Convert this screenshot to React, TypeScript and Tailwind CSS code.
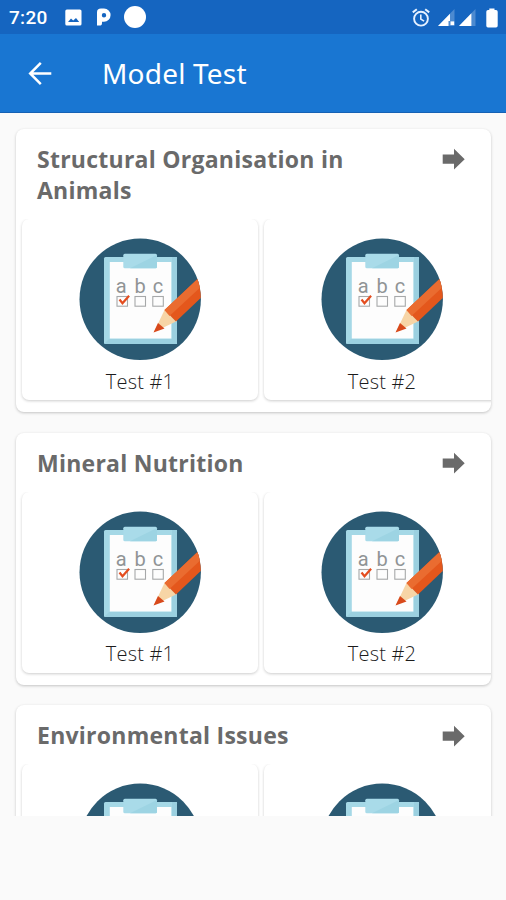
import React from "react";

const SANS = "font-['Open_Sans',sans-serif]";

function StatusBar() {
  return (
    <div className="flex h-[34px] items-center justify-between bg-[#1565c0] text-white">
      <div className="flex items-center pl-[9px]">
        <span className="w-[56px] pt-px font-[Roboto,sans-serif] text-[19px] leading-[34px] font-medium tracking-[0.3px]">7:20</span>
        <svg className="h-[17px] w-[17px]" viewBox="0 0 17 17">
          <rect x="0.3" y="0.5" width="16.2" height="16" rx="1.6" fill="#fff" />
          <path d="M3 13l3-3.5 2.2 2L11 9l3.2 4z" fill="#1565c0" />
        </svg>
        <svg className="ml-[14px] h-[18px] w-[16px]" viewBox="0 0 16 18">
          <path fillRule="evenodd" d="M1 17.5V4.2Q1 .5 5 .5h3a6.6 6.6 0 0 1 0 13.2H6v1.2Q6 17.5 3.5 17.5zM8 5a2.2 2.2 0 1 0 0 4.4 2.2 2.2 0 0 0 0-4.4z" fill="#fff" />
        </svg>
        <div className="ml-[12px] h-[22px] w-[22px] rounded-full bg-white" />
      </div>
      <div className="flex items-center pt-px pr-[8px]">
        <svg className="h-[19px] w-[18px]" viewBox="0 0 18 19" fill="none" stroke="#e6f1ff">
          <circle cx="9" cy="10.7" r="6.9" strokeWidth="1.9" />
          <path d="M8.8 6.5v4.6l3.3 2.1" strokeWidth="1.6" />
          <path d="M.8 4.4l4-3.2M17.2 4.4l-4-3.2" strokeWidth="2" />
        </svg>
        <svg className="ml-[8px] h-[17px] w-[17px]" viewBox="0 0 17 17">
          <path d="M16.5 0v17H0z" fill="#4c8ad0" />
          <path d="M12 4.7V12h-1.5v5H0z" fill="#fff" />
          <rect x="12.5" y="12.4" width="3.7" height="3.7" fill="#fff" />
        </svg>
        <svg className="ml-[4px] h-[17px] w-[17px]" viewBox="0 0 17 17">
          <path d="M16.5 0v17H0z" fill="#4c8ad0" />
          <path d="M12.4 4.3V17H0z" fill="#fff" />
        </svg>
        <svg className="ml-[10px] h-[20px] w-[12px]" viewBox="0 0 12 20">
          <path d="M3.3 2V.4h5.2V2H10q1.7 0 1.7 1.7v14.1q0 1.7-1.7 1.7H2Q.3 19.5.3 17.8V3.7Q.3 2 2 2z" fill="#fff" />
        </svg>
      </div>
    </div>
  );
}

function AppBar() {
  return (
    <header className="flex h-[79px] items-center border-b border-[#1561b4] bg-[#1976d2] pl-[28px] text-white">
      <svg className="h-[24px] w-[24px]" viewBox="0 0 24 24" fill="none" stroke="#fff" strokeWidth="2.5">
        <path d="M23.3 12.5H2.5M12.8 1.9L2.2 12.5l10.6 10.6" />
      </svg>
      <h1 className="ml-[50px] font-['Noto_Sans',sans-serif] text-[28px] leading-[36px] font-normal tracking-[0.2px]">Model Test</h1>
    </header>
  );
}

function QuizIcon() {
  return (
    <svg className="h-[122px] w-[122px] shrink-0" viewBox="79 238 122 122">
      <defs>
        <clipPath id="disc">
          <circle cx="140.2" cy="299.3" r="60.7" />
        </clipPath>
      </defs>
      <g clipPath="url(#disc)">
        <rect x="79" y="238" width="122" height="122" fill="#2b5a73" />
        <rect x="104" y="257" width="73" height="87" rx="1.5" fill="#a5d8e6" />
        <path d="M177 257v87h-73l5-5h63v-82z" fill="#9bd0e0" />
        <rect x="109.8" y="262" width="61.5" height="76.5" fill="#fdfdfd" />
        <rect x="123.3" y="253.7" width="33.7" height="14.5" rx="1.5" fill="#a9dbe9" />
        <path d="M157 255v11.7q0 1.5-1.5 1.5H130z" fill="#9dd4e3" />
        <g className="font-[Roboto,sans-serif] text-[20px]" fill="#909496" textAnchor="middle">
          <text x="121.3" y="293">a</text>
          <text x="140" y="293">b</text>
          <text x="158" y="293">c</text>
        </g>
        <g fill="none" stroke="#a6a8a9" strokeWidth="1.1">
          <rect x="117" y="296.5" width="10.5" height="9.7" />
          <rect x="135" y="296.5" width="10.5" height="9.7" />
          <rect x="152.8" y="296.5" width="10.5" height="9.7" />
        </g>
        <path d="M119.5 299.5l3 3.8 6.6-7.6" fill="none" stroke="#e44d1f" strokeWidth="2.2" />
        <path d="M154 332l10.5-22 11.5 11.5z" fill="#f7d5a6" />
        <path d="M153.5 332.5l4.5-9.5 6.5 5.4z" fill="#d8491b" />
        <path d="M164.5 310L204 273v22L176 321.5z" fill="#e4571c" />
        <path d="M164.5 310L204 273v11l-34.5 32z" fill="#ea6c30" />
      </g>
    </svg>
  );
}

function TestCard({ name }: { name: string }) {
  return (
    <div className="flex h-[181px] w-[236px] shrink-0 flex-col items-center rounded-[7px] bg-white pt-[19px] shadow-[0_1px_3px_rgba(0,0,0,0.2)]">
      <QuizIcon />
      <span className={`${SANS} mt-[7.5px] text-[20px] leading-[28px] font-light tracking-[0.2px] text-[#1c1c1c]`}>{name}</span>
    </div>
  );
}

function Section({ title }: { title: string }) {
  return (
    <section className="w-[475px] shrink-0 overflow-hidden rounded-[8px] bg-white pb-[12px] shadow-[0_1px_3px_rgba(0,0,0,0.22)]">
      <div className="flex items-start justify-between pt-[15px] pr-[26px] pb-[12.6px] pl-[21px]">
        <h2 className={`${SANS} w-[340px] text-[23px] leading-[31.5px] font-bold tracking-[0.25px] text-[#6a6a6a]`}>{title}</h2>
        <svg className="mt-[4.5px] h-[22px] w-[23px]" viewBox="0 0 23 22">
          <path d="M.7 6.5H12V.8L22.7 11.2 12 21.5v-5.8H.7z" fill="#6a6a6a" />
        </svg>
      </div>
      <div className="-mb-[4px] flex gap-[6px] overflow-hidden pb-[4px] pl-[6px]">
        <TestCard name="Test #1" />
        <TestCard name="Test #2" />
      </div>
    </section>
  );
}

export default function App() {
  return (
    <div className="h-[900px] w-[506px] overflow-hidden bg-[#fafafa]">
      <StatusBar />
      <AppBar />
      <main className="flex h-[703px] flex-col gap-[20.5px] overflow-hidden px-[16px] pt-[15.5px]">
        <Section title="Structural Organisation in Animals" />
        <Section title="Mineral Nutrition" />
        <Section title="Environmental Issues" />
      </main>
    </div>
  );
}
